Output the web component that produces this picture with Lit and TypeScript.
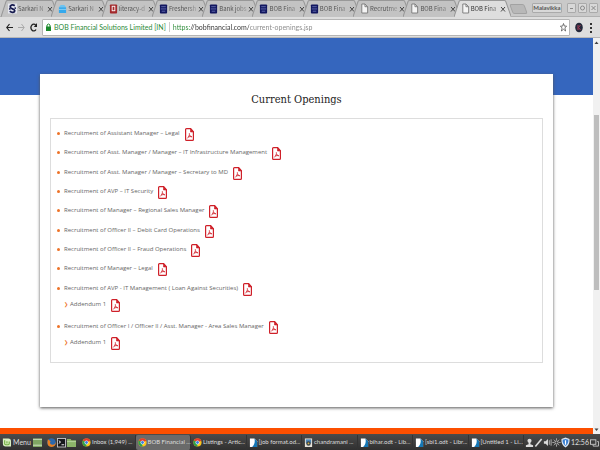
import { LitElement, html, svg, css, nothing } from "lit";
import { customElement, property } from "lit/decorators.js";
import { classMap } from "lit/directives/class-map.js";

const page = svg`<path d="M2 .5h3.5L8.500 3.500V10.500H2z" fill="#f4f4f4" stroke="#777"/><path d="M5.500 .5v3h3" fill="none" stroke="#777"/>`;
const chrome = svg`<circle cx="5" cy="5.500" r="4.500" fill="#fbc51b"/><path d="M5 5.500L1 3.300A4.600 4.600 0 0 1 9.200 3.500z" fill="#e23b2e"/><path d="M5 5.500L1 3.300A4.600 4.600 0 0 0 4.800 10.100z" fill="#2ea24c"/><circle cx="5" cy="5.500" r="2.200" fill="#fff"/><circle cx="5" cy="5.500" r="1.600" fill="#3e7de0"/>`;
const writer = svg`<path d="M1 1h5l3 3v6.500H1z" fill="#fff"/><path d="M6 1l3 3v6.500H3.500C6 8 7 5 6 1z" fill="#1677b5"/>`;
const glyphs: Record<string, unknown> = {
  page,
  chrome,
  writer,
  swirl: svg`<rect width="10" height="11" fill="#e4e6ee"/><path d="M7.500 2.500C5 .5 2 2 2.500 4s5 1.800 5 4S4 10.500 2 8.500" fill="none" stroke="#15194d" stroke-width="2"/><circle cx="2" cy="6" r="1" fill="#15194d"/><circle cx="8" cy="5" r="1" fill="#15194d"/>`,
  bag: svg`<path d="M1 4h8v6.500H1z" fill="#35a9ec"/><path d="M1 6h8v1H1z" fill="#8ad0f7"/><path d="M1 4l2-2.500h4L9 4z" fill="#6cc3f2"/>`,
  red: svg`<rect x="1" y="1" width="8" height="10" rx="1" fill="#a3282b"/><rect x="3.500" y="3" width="3" height="5" fill="none" stroke="#fff"/>`,
  navy: svg`<rect x="1" y="1" width="8" height="10" rx="1" fill="#12175f"/><path d="M2.500 3.500h5M2 6h6M3 8.500h4" stroke="#6670b4"/>`,
  photo: svg`<rect x="1" y="1" width="8" height="9.500" fill="#e9e5da"/><path d="M2 2h6v4H2z" fill="#4c86b8"/><circle cx="5" cy="6.500" r="2.500" fill="#37424d"/><circle cx="5" cy="6.500" r="1" fill="#d8b546"/>`,
  mint: svg`<path d="M1 1h6q3 0 3 3v6H4Q1 10 1 7z" fill="#d9efc2"/><path d="M3 3v4q0 1 1 1h3q1 0 1-1V4.500M5.500 4v2.500" fill="none" stroke="#6dab3c" stroke-width="1.200"/>`,
  desktop: svg`<rect x="0" y="1" width="10" height="9.500" fill="#7fa563"/><path d="M0 2h10M0 8.500h10" stroke="#d6e5c8"/>`,
  firefox: svg`<circle cx="5" cy="5.500" r="4.800" fill="#2b68ad"/><path d="M1 2q-2 8 4 8.500 5 0 5-6-1 4-4 3.500-4-.5-2-4z" fill="#e97f20"/>`,
  terminal: svg`<rect x=".5" y="1" width="9" height="9.500" fill="#16181c" stroke="#c6c6cb"/><path d="M2 3.500l2 1.500-2 1.500M5 8h3" fill="none" stroke="#fff"/>`,
  folder: svg`<path d="M0 1.500h4l1 1.500h5v7.500H0z" fill="#8cb569"/><path d="M0 4.500h10" stroke="#b9d6a0"/>`,
  user: svg`<circle cx="5" cy="3.500" r="2.300" fill="#ddd"/><path d="M4 5h2v2.500l3 1V10.500H1V8.500l3-1z" fill="#ddd"/>`,
  pen: svg`<path d="M1.500 10L8.500 1.500" stroke="#ddd" stroke-width="1.800"/>`,
  sound: svg`<path d="M1 4h2l2.500-2.500v8L3 7H1z" fill="#ddd"/><path d="M7 3v5M9 2v7" stroke="#bbb"/>`,
  sun: svg`<circle cx="5" cy="5.500" r="1.800" fill="none" stroke="#ccc"/><path d="M5 1v1.500M5 8.500V10M.5 5.500H2M8 5.500h1.500M2 2.500l1 1M7 7.500l1 1M8 2.500l-1 1M3 7.500l-1 1" stroke="#ccc"/>`,
  shield: svg`<path d="M5 0l4.500 1.500Q10 8 5 11 0 8 .5 1.500z" fill="#dfe9f5"/><path d="M5 1.500l3.200 1Q8.500 7 5 9.500 1.500 7 1.800 2.500z" fill="#3b7fd0"/><path d="M5 3v5" stroke="#fff" stroke-width="1.300"/>`,
  windows: svg`<rect x=".5" y="2.500" width="6" height="5" fill="none" stroke="#ccc"/><path d="M8 4.500h1.500v5h-6V8" fill="none" stroke="#ccc"/>`,
};

@customElement("ui-glyph")
export class UiGlyph extends LitElement {
  @property() name = "page";
  static styles = css`
    :host { display: block; flex: none; width: 9px; height: 11px; }
    svg { display: block; width: 100%; height: 100%; }
  `;
  render() {
    return html`<svg viewBox="0 0 10 11" aria-hidden="true">${glyphs[this.name]}</svg>`;
  }
}

const tabs = [
  ["swirl", "Sarkari N"], ["bag", "Sarkari N"], ["red", "literacy-d"], ["navy", "Freshersh"],
  ["navy", "Bank jobs"], ["navy", "BOB Fina"], ["navy", "BOB Fina"], ["page", "Recrutme"],
  ["page", "BOB Fina"], ["page", "BOB Fina"],
];

const openings: { title: string; addendum?: string }[] = [
  { title: "Recruitment of Assistant Manager – Legal" },
  { title: "Recruitment of Asst. Manager / Manager – IT Infrastructure Management" },
  { title: "Recruitment of Asst. Manager / Manager – Secretary to MD" },
  { title: "Recruitment of AVP – IT Security" },
  { title: "Recruitment of Manager – Regional Sales Manager" },
  { title: "Recruitment of Officer II – Debit Card Operations" },
  { title: "Recruitment of Officer II – Fraud Operations" },
  { title: "Recruitment of Manager – Legal" },
  { title: "Recruitment of AVP - IT Management ( Loan Against Securities)", addendum: "Addendum 1" },
  { title: "Recruitment of Officer I / Officer II / Asst. Manager - Area Sales Manager", addendum: "Addendum 1" },
];

const tasks = [
  ["chrome", "Inbox (1,949) ..."], ["chrome", "BOB Financial ..."], ["chrome", "Listings - Artic..."], ["writer", "[job format.od..."],
  ["photo", "chandramani ..."], ["writer", "bihar.odt - Lib..."], ["writer", "[sbi1.odt - Libr..."], ["writer", "[Untitled 1 - Li..."],
];

@customElement("app-root")
export class AppRoot extends LitElement {
  static styles = css`
    :host {
      display: flex; flex-direction: column; min-height: 100vh; background: #fff;
      font-family: Lato, "Open Sans", sans-serif; font-size: 7px; line-height: 10px; color: #666;
    }
    * { box-sizing: border-box; }
    button, input { font: inherit; color: inherit; background: none; border: 0; padding: 0; margin: 0; }
    svg { display: block; flex: none; }

    .tabs { display: flex; height: 17px; padding-left: 4px; background: #c9c9c9; border-bottom: 1px solid #b0b0b0; }
    .tab { position: relative; display: flex; align-items: center; flex: 1 1 0; min-width: 0; padding: 1px 1px 0 4px; gap: 1px; color: #555; font-family: "Noto Sans CJK SC", sans-serif; font-size: 6px; }
    .tab.active { color: #333; z-index: 1; }
    .shape { position: absolute; left: -3px; top: 0; width: calc(100% + 7px); height: 17px; fill: #c3c3c3; stroke: #989898; }
    .active .shape { fill: #dedede; }
    .tab ui-glyph { position: relative; height: 11px; }
    .pick { position: relative; flex: 1; min-width: 0; text-align: left; white-space: nowrap; mask-image: linear-gradient(to right, #000 60%, #0004 100%); }
    .close { position: relative; width: 6px; height: 8px; }
    .new { width: 15px; height: 10px; margin: 4px 6px 0 4px; background: #b8b8b8; border: 1px solid #a2a2a2; border-radius: 2px; transform: skewX(20deg); }
    .window { display: flex; align-items: center; gap: 2px; padding-right: 2px; }
    .window button { width: 9px; height: 10px; background: #d8d8d8; border: 1px solid #aaa; border-radius: 1px; }
    .window .who { width: 30px; margin-right: 3px; line-height: 8px; font-size: 6px; font-weight: bold; color: #555; }

    .toolbar { display: flex; align-items: center; height: 21px; padding: 0 6px; gap: 5px; background: #dedede; border-bottom: 1px solid #b8b8b8; }
    .toolbar button { width: 7px; height: 11px; }
    .address { display: flex; align-items: center; flex: 1; height: 17px; padding: 0 2px 0 3px; background: #fff; border: 1px solid #b5b5b5; border-radius: 1px; gap: 3px; }
    .owner { color: #2a8a36; padding-right: 3px; border-right: 1px solid #ccc; white-space: nowrap; }
    .url {
      flex: 1; min-width: 0; height: 12px; outline: 0; color: transparent;
      background: linear-gradient(to right, #2a8a36 17px, #333 17px, #333 76px, #888 76px); -webkit-background-clip: text; background-clip: text;
    }

    .view { display: flex; flex: 1; }
    main {
      display: flex; flex: 1; min-width: 0; padding: 36px 40px 21px; border-bottom: 6px solid #fc4f00;
      background: linear-gradient(#3566be 57px, #fff 57px);
    }
    .card { display: flex; flex: 1; flex-direction: column; padding: 18px 10px 44px; background: #fff; box-shadow: 0 1px 3px #555; }
    h1 { margin: 0 0 10px; font: 11px/16px "DejaVu Serif Condensed", "DejaVu Serif", serif; color: #222; text-align: center; }
    .list { display: flex; flex: 1; flex-direction: column; justify-content: space-between; margin: 0; padding: 9px 6px; border: 1px solid #ddd; list-style: none; font-family: "Open Sans", sans-serif; font-size: 6px; }
    .sub { margin: 3px 0; padding: 0 0 0 7px; list-style: none; }
    .row { display: flex; align-items: flex-start; height: 13px; white-space: nowrap; }
    .row::before { content: ""; width: 3px; height: 3px; margin: 4px 4px 0 0; border-radius: 2px; background: #ee7328; }
    .sub .row::before { content: "❯"; width: 3px; height: 10px; margin: 0 3px 0 0; background: none; color: #ee7328; font-size: 5px; }
    .pdf { display: block; margin-left: 5px; }

    .scroll { display: flex; flex-direction: column; width: 7px; padding: 0 1px; background: #f1f1f1; }
    .thumb { height: 175px; margin-top: 68px; background: #bebebe; }
    .arrow { width: 5px; height: 9px; }
    .down { margin-top: auto; }

    .taskbar { display: flex; align-items: center; height: 16px; padding: 0 1px 0 2px; background: linear-gradient(#4b4b4b, #303030); color: #ddd; }
    .taskbar button { display: flex; align-items: center; white-space: nowrap; }
    .menu { gap: 2px; width: 31px; }
    .quick { display: flex; gap: 1px; width: 47px; }
    .quick button:first-child { margin-right: 4px; }
    .tasks { display: flex; flex: 1; min-width: 0; font-size: 6px; }
    .tasks .task { flex: 1 1 0; min-width: 0; height: 15px; gap: 1px; padding: 0 1px 0 2px; border-right: 1px solid #333; }
    .tasks .current { background: #6a6a6a; border-radius: 2px; }
    .tray { display: flex; align-items: center; margin-left: 1px; }
    .tray time { margin: 0 1px; }
  `;

  private pdf(title: string) {
    return html`<a class="pdf" href="#" aria-label="${title} PDF"><svg width="9" height="13" viewBox="0 0 9 13" fill="none" stroke="#cf2029">
      <path d="M1.500 .6H5.700L8.400 3.700V11.400Q8.400 12.400 7.500 12.400H1.500Q.6 12.400 .6 11.400V1.600Q.6 .6 1.500 .6z" stroke-width="1.200"/>
      <path d="M5.500 .8V4H8.400z" fill="#cf2029" stroke-width=".6"/>
      <path d="M4.300 5.200C5 7 3.500 9 2.300 10.400M4.400 6.800Q5 8.500 6.900 8.800M3.300 9Q5 8.200 6.900 8.800" stroke-width=".8"/></svg></a>`;
  }

  render() {
    return html`
      <header>
        <div class="tabs">
          ${tabs.map(([icon, label], i) => html`<div class=${classMap({ tab: true, active: i === tabs.length - 1 })}>
            <svg class="shape" viewBox="0 0 57 17" preserveAspectRatio="none"><path d="M0 17L5 1.500Q5.300 .5 6.500 .5H50Q51.200 .5 51.500 1.500L57 17"/></svg>
            <ui-glyph name=${icon}></ui-glyph>
            <button class="pick">${label}</button>
            <button class="close" aria-label="Close tab"><svg width="6" height="8" viewBox="0 0 6 8"><path d="M1 2l4 4.500M5 2L1 6.500" stroke="#444"/></svg></button>
          </div>`)}
          <button class="new" aria-label="New tab"></button>
          <div class="window">
            <button class="who">Malavikka</button>
            <button aria-label="Minimize"><svg width="7" height="8"><path d="M2 4.500h3" stroke="#888"/></svg></button>
            <button aria-label="Restore"><svg width="7" height="8"><circle cx="3.500" cy="4" r="2" fill="none" stroke="#888"/></svg></button>
            <button aria-label="Close"><svg width="7" height="8"><path d="M1.500 2l4 4M5.500 2l-4 4" stroke="#888"/></svg></button>
          </div>
        </div>
        <div class="toolbar">
          <button aria-label="Back"><svg width="7" height="11" viewBox="0 0 7 11"><path d="M7 5.500H1M3.500 2L.8 5.500 3.500 9" fill="none" stroke="#222" stroke-width="1.200"/></svg></button>
          <button aria-label="Forward"><svg width="7" height="11" viewBox="0 0 7 11"><path d="M0 5.500h6M3.500 2l2.700 3.500L3.500 9" fill="none" stroke="#aaa"/></svg></button>
          <button aria-label="Reload"><svg width="7" height="11" viewBox="0 0 7 11"><path d="M5.800 3.300A2.700 3.400 0 1 0 6 7.500" fill="none" stroke="#222" stroke-width="1.300"/><path d="M7 1v4H3.800z" fill="#222"/></svg></button>
          <div class="address">
            <svg width="5" height="8" viewBox="0 0 5 8"><path d="M0 3.500h5V8H0z" fill="#1c8a2c"/><path d="M1 4V2q1.500-2 3 0v2" fill="none" stroke="#1c8a2c"/></svg>
            <span class="owner">BOB Financial Solutions Limited [IN]</span>
            <input class="url" aria-label="Address" value="https://bobfinancial.com/current-openings.jsp" />
            <button aria-label="Bookmark"><svg width="7" height="11" viewBox="0 0 7 11"><path d="M3.500 1.500l.9 2.600H6.600L4.900 6l.7 3-2.100-1.700L1.400 9l.7-3L.4 4.100h2.200z" fill="none" stroke="#555" stroke-width=".8"/></svg></button>
          </div>
          <button aria-label="Extension"><svg width="8" height="11" viewBox="0 0 8 11"><ellipse cx="4" cy="5.500" rx="3.800" ry="4.800" fill="#25293b"/><path d="M3 3v5M5.500 3L3.500 5.500 5.500 8" fill="none" stroke="#a43b54"/></svg></button>
          <button aria-label="Browser menu"><svg width="7" height="11"><path d="M3 1h2v2H3zM3 5h2v2H3zM3 9h2v2H3z" fill="#333"/></svg></button>
        </div>
      </header>
      <div class="view">
        <main>
          <section class="card">
            <h1>Current Openings</h1>
            <ul class="list">
              ${openings.map((o) => html`<li>
                <div class="row"><span>${o.title}</span>${this.pdf(o.title)}</div>
                ${o.addendum ? html`<ul class="sub"><li class="row"><span>${o.addendum}</span>${this.pdf(o.addendum)}</li></ul>` : nothing}
              </li>`)}
            </ul>
          </section>
        </main>
        <div class="scroll">
          <svg class="arrow" viewBox="0 0 5 9"><path d="M.5 6h4L2.500 3.500z" fill="#444"/></svg>
          <div class="thumb"></div>
          <svg class="arrow down" viewBox="0 0 5 9"><path d="M.5 3.500h4L2.500 6z" fill="#444"/></svg>
        </div>
      </div>
      <footer class="taskbar">
        <button class="menu"><ui-glyph name="mint"></ui-glyph>Menu</button>
        <div class="quick">
          ${["desktop", "firefox", "terminal", "folder"].map((n) => html`<button aria-label=${n}><ui-glyph name=${n}></ui-glyph></button>`)}
        </div>
        <nav class="tasks">
          ${tasks.map(([icon, label], i) => html`<button class=${classMap({ task: true, current: i === 1 })}><ui-glyph name=${icon}></ui-glyph>${label}</button>`)}
        </nav>
        <div class="tray">
          ${["user", "pen", "sound", "sun", "shield"].map((n) => html`<ui-glyph name=${n}></ui-glyph>`)}
          <time>12:56</time><ui-glyph name="windows"></ui-glyph>
        </div>
      </footer>
    `;
  }
}
